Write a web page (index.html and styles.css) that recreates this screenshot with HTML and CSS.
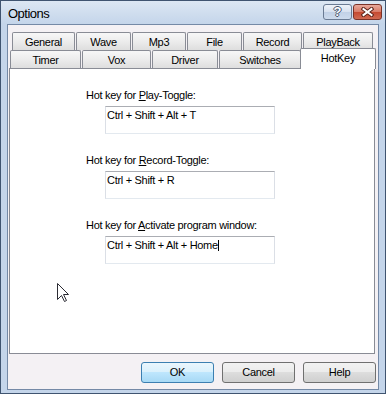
FILE: index.html
```
<!DOCTYPE html>
<html lang="en">
<head>
  <title>Options</title>
  <meta charset="UTF-8">
  <meta name="viewport" content="width=device-width, initial-scale=1">
  <link rel="stylesheet" href="styles.css">
</head>
<body>

  <div class="window">

    <div class="titlebar">
      <span class="title">Options</span>
      <div class="caption-buttons">
        <span class="cap-btn help-btn">?</span>
        <span class="cap-btn close-btn">
          <svg width="13" height="10" viewBox="0 0 13 10">
            <path d="M2.5 2 L10.5 8 M10.5 2 L2.5 8" stroke="#5a2218" stroke-width="4" stroke-linecap="square"/>
            <path d="M2.5 2 L10.5 8 M10.5 2 L2.5 8" stroke="#fff" stroke-width="2" stroke-linecap="square"/>
          </svg>
        </span>
      </div>
    </div>

    <div class="client">

      <div class="sheet">
        <!-- back row of tabs -->
        <div class="tab-row back">
          <div class="tab">General</div>
          <div class="tab">Wave</div>
          <div class="tab">Mp3</div>
          <div class="tab">File</div>
          <div class="tab">Record</div>
          <div class="tab">PlayBack</div>
        </div>
        <!-- front row, the selected tab sits here -->
        <div class="tab-row front">
          <div class="tab">Timer</div>
          <div class="tab">Vox</div>
          <div class="tab">Driver</div>
          <div class="tab">Switches</div>
          <div class="tab active">HotKey</div>
        </div>

        <div class="page">
          <div class="field">
            <div class="field-label">Hot key for <u>P</u>lay-Toggle:</div>
            <div class="hotkey-box">Ctrl + Shift + Alt + T</div>
          </div>
          <div class="field">
            <div class="field-label">Hot key for <u>R</u>ecord-Toggle:</div>
            <div class="hotkey-box">Ctrl + Shift + R</div>
          </div>
          <div class="field">
            <div class="field-label">Hot key for <u>A</u>ctivate program window:</div>
            <div class="hotkey-box">Ctrl + Shift + Alt + Home<span class="caret"></span></div>
          </div>
        </div>
      </div>

      <div class="actions">
        <button class="btn default">OK</button>
        <button class="btn">Cancel</button>
        <button class="btn">Help</button>
      </div>

    </div>

    <svg class="cursor" width="13" height="20" viewBox="0 0 13 20">
      <path d="M0.5 0.5 V16.5 L4.5 12.5 L7.5 18.5 L9.5 17.5 L6.5 11.5 H11.5 Z" fill="#fff" stroke="#2b2b33" stroke-linejoin="miter"/>
    </svg>

  </div>

</body>
</html>
```

FILE: styles.css
```
* {
  margin: 0;
  box-sizing: border-box;
}

body {
  font-family: 'Liberation Sans', Arial, sans-serif;
  font-size: 11px;
  letter-spacing: -0.3px;
  color: #000;
  background: #fff;
}

.window {
  position: relative;
  width: 386px;
  height: 394px;
  display: flex;
  flex-direction: column;
  padding: 0 6px 3px 6px;
  border: 1px solid #3f5470;
  background: #c4d5ea;
}

/* title bar */
.titlebar {
  height: 23px;
  margin: 0 -6px;
  padding: 0 3px 0 7px;
  display: flex;
  align-items: flex-start;
  background: linear-gradient(#dce7f3, #c4d5ea);
}

.title {
  flex: 1;
  padding-top: 1px;
  line-height: 23px;
  font-size: 13px;
  letter-spacing: -0.5px;
}

.caption-buttons {
  display: flex;
  gap: 1px;
  margin-top: 3px;
}

.cap-btn {
  width: 29px;
  height: 16px;
  border: 1px solid;
  border-radius: 3px;
  display: flex;
  align-items: center;
  justify-content: center;
}

.help-btn {
  border-color: #6a7b93;
  background: linear-gradient(#eef3fa, #d6e1ef 50%, #c1d1e6 50%, #cddbed);
  color: #fff;
  font-weight: bold;
  font-size: 13px;
  letter-spacing: 0;
  line-height: 14px;
  text-shadow: 1px 0 #45556d, -1px 0 #45556d, 0 1px #45556d, 0 -1px #45556d;
}

.close-btn {
  border-color: #7a3328;
  background: linear-gradient(#e9aa9c, #d87a66 50%, #c4482f 50%, #d06a52);
}

/* client area */
.client {
  flex: 1;
  display: flex;
  flex-direction: column;
  padding: 7px 0 6px 0;
  border: 1px solid #7489a6;
  background: #f4f1f4;
}

.sheet {
  flex: 1;
  display: flex;
  flex-direction: column;
  width: 366px;
  margin-left: 1px;
}

.tab-row {
  display: grid;
  column-gap: 1px;
}

.tab-row.back {
  grid-template-columns: 63px 55px 54px 55px 59px 70px;
  margin-left: 3px;
}

.tab-row.front {
  grid-template-columns: 71px 69px 66px 82px 72px;
  margin-left: 1px;
}

.tab {
  height: 18px;
  padding-top: 1px;
  line-height: 16px;
  text-align: center;
  border: 1px solid #898c95;
  border-bottom: none;
  border-radius: 2px 2px 0 0;
  background: linear-gradient(#f7f7f7, #ececec 50%, #dedede);
}

.tab.active {
  position: relative;
  z-index: 1;
  height: 21px;
  margin: -2px -2px -1px -2px;
  background: #fff;
}

.page {
  flex: 1;
  padding: 20px 0 0 76px;
  border: 1px solid #898c95;
  background: #fff;
}

.field + .field {
  margin-top: 20px;
}

.field-label {
  line-height: 13px;
}

.hotkey-box {
  width: 170px;
  height: 28px;
  margin: 4px 0 0 19px;
  padding: 2px 1px;
  line-height: 13px;
  border: 1px solid #dbdfe6;
  border-top-color: #abadb3;
  border-bottom-color: #e3e9ef;
  background: #fff;
}

.caret {
  display: inline-block;
  width: 1px;
  height: 11px;
  vertical-align: -2px;
  background: #000;
}

/* dialog buttons */
.actions {
  display: flex;
  justify-content: flex-end;
  gap: 8px;
  margin-top: 8px;
  padding-right: 2px;
}

.btn {
  width: 73px;
  height: 21px;
  padding: 0;
  font-family: 'Liberation Sans', Arial, sans-serif;
  font-size: 11px;
  letter-spacing: -0.3px;
  line-height: 19px;
  color: #000;
  border: 1px solid #707070;
  border-radius: 3px;
  background: linear-gradient(#f2f2f2, #ebebeb 50%, #dddddd 50%, #cfcfcf);
}

.btn.default {
  border-color: #3c7fb1;
  background: linear-gradient(#eaf6fd, #d9f0fc 50%, #bee6fd 50%, #a7d9f5);
}

.cursor {
  position: absolute;
  left: 56px;
  top: 282px;
}
```
